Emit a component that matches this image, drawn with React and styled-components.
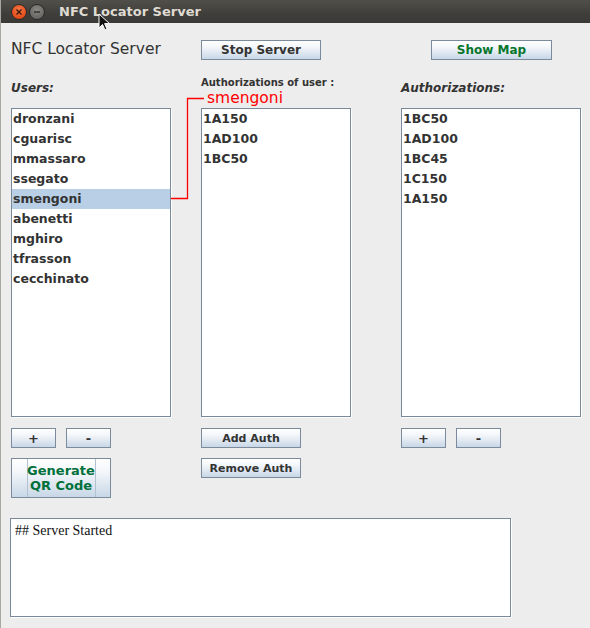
import React from "react";
import styled, { createGlobalStyle } from "styled-components";

const GlobalStyle = createGlobalStyle`
  html, body {
    margin: 0;
    padding: 0;
    background: #ededed;
  }
  body {
    font-family: "DejaVu Sans", sans-serif;
  }
`;

const Window = styled.div`
  width: 590px;
  height: 628px;
  background: #ededed;
  border-left: 1px solid #a9a7a1;
  box-sizing: border-box;
  position: relative;
  overflow: hidden;
`;

const TitleBar = styled.div`
  height: 23px;
  background: linear-gradient(to bottom, #504f4a 0%, #3f3e3a 60%, #3a3935 100%);
  display: flex;
  align-items: center;
  padding-left: 10px;
  box-sizing: border-box;
  position: relative;
`;

const WinButton = styled.div`
  width: 16px;
  height: 16px;
  border-radius: 50%;
  margin-right: 2px;
  display: flex;
  align-items: center;
  justify-content: center;
  background: ${(p) =>
    p.close
      ? "radial-gradient(circle at 50% 35%, #f5794b 0%, #e5511f 60%, #c83e12 100%)"
      : "radial-gradient(circle at 50% 35%, #8a8985 0%, #6d6c68 60%, #5a5955 100%)"};
  border: 1px solid #2c2b28;
  box-sizing: border-box;
`;

const WindowTitle = styled.span`
  margin-left: 12px;
  font-family: "DejaVu Sans", sans-serif;
  font-weight: bold;
  font-size: 13px;
  color: #dfdbd2;
`;

const Cursor = styled.svg`
  position: absolute;
  left: 97px;
  top: 13px;
`;

const Body = styled.div`
  position: relative;
  padding: 17px 0 0 10px;
`;

const Grid = styled.div`
  display: grid;
  grid-template-columns: 190px 200px 179px;
  grid-template-rows: 20px 48px 309px auto auto;
`;

const AppLabel = styled.div`
  font-size: 15.5px;
  color: #333333;
  line-height: 18px;
`;

const ColumnHead = styled.div`
  align-self: end;
  display: flex;
  flex-direction: column;
`;

const SectionLabel = styled.div`
  font-size: 12px;
  font-weight: bold;
  font-style: italic;
  color: #333333;
  line-height: 14px;
  margin-bottom: 13px;
`;

const SmallLabel = styled.div`
  font-size: 10px;
  font-weight: bold;
  color: #333333;
  line-height: 12px;
  margin-bottom: 1px;
`;

const SelectedName = styled.div`
  font-size: 15.5px;
  color: #ff0000;
  line-height: 16px;
  padding-left: 6px;
  margin-bottom: 2px;
`;

const ListBox = styled.div`
  width: ${(p) => p.w}px;
  height: 309px;
  box-sizing: border-box;
  background: #ffffff;
  border: 1px solid #7a8a9b;
  box-shadow: 1px 1px 0 #ffffff;
  display: flex;
  flex-direction: column;
`;

const ListItem = styled.div`
  height: 20px;
  line-height: 20px;
  padding-left: 1px;
  font-size: 12.5px;
  font-weight: bold;
  color: #333333;
  background: ${(p) => (p.selected ? "#b8cfe5" : "transparent")};
`;

const Button = styled.button`
  width: ${(p) => p.w}px;
  height: ${(p) => p.h || 20}px;
  margin-left: ${(p) => p.offset || 0}px;
  padding: 0;
  box-sizing: border-box;
  border: 1px solid #7b8b9c;
  border-radius: 0;
  background: linear-gradient(to bottom, #ffffff 0%, #f3f6fa 35%, #c8d7e7 100%);
  font-family: "DejaVu Sans", sans-serif;
  font-size: ${(p) => p.fs || 12}px;
  font-weight: bold;
  color: ${(p) => (p.green ? "#06762c" : "#333333")};
  line-height: 15px;
  display: flex;
  align-items: center;
  justify-content: center;
`;

const TallButton = styled(Button)`
  color: #00703a;
  font-size: 13px;
  line-height: 15px;
  align-items: stretch;
`;

const TallInner = styled.span`
  width: 67px;
  border-left: 1px solid #b2c0d0;
  border-right: 1px solid #b2c0d0;
  display: flex;
  align-items: center;
  justify-content: center;
  text-align: center;
  white-space: nowrap;
`;

const ButtonRow = styled.div`
  display: flex;
  gap: 10px;
  margin-top: ${(p) => p.top}px;
`;

const Cell = styled.div`
  margin-top: ${(p) => p.top || 0}px;
`;

const Connector = styled.svg`
  position: absolute;
  left: 169px;
  top: 74px;
`;

const LogArea = styled.div`
  width: 501px;
  height: 99px;
  box-sizing: border-box;
  margin: 20px 0 0 -1px;
  background: #ffffff;
  border: 1px solid #7a8a9b;
  box-shadow: 1px 1px 0 #ffffff;
  padding: 4px 0 0 4px;
  font-family: "Liberation Serif", "DejaVu Serif", serif;
  font-size: 14px;
  color: #111111;
`;

const users = [
  "dronzani",
  "cguarisc",
  "mmassaro",
  "ssegato",
  "smengoni",
  "abenetti",
  "mghiro",
  "tfrasson",
  "cecchinato",
];
const userAuths = ["1A150", "1AD100", "1BC50"];
const allAuths = ["1BC50", "1AD100", "1BC45", "1C150", "1A150"];

export default function App() {
  const selected = "smengoni";
  return (
    <>
      <GlobalStyle />
      <Window>
        <TitleBar>
          <WinButton close>
            <svg width="8" height="8" viewBox="0 0 8 8">
              <path d="M1.5 1.5 L6.5 6.5 M6.5 1.5 L1.5 6.5" stroke="#3a1a0c" strokeWidth="1.4" />
            </svg>
          </WinButton>
          <WinButton>
            <svg width="8" height="8" viewBox="0 0 8 8">
              <path d="M1 4 L7 4" stroke="#2e2d2a" strokeWidth="1.4" />
            </svg>
          </WinButton>
          <WindowTitle>NFC Locator Server</WindowTitle>
          <Cursor width="14" height="20" viewBox="0 0 14 20">
            <path
              d="M1 1 L1 15 L4.5 11.5 L7 17 L9 16 L6.6 10.6 L11.5 10.6 Z"
              fill="#111"
              stroke="#fff"
              strokeWidth="1"
            />
          </Cursor>
        </TitleBar>
        <Body>
          <Grid>
            <AppLabel>NFC Locator Server</AppLabel>
            <Button w={120}>Stop Server</Button>
            <Button w={121} offset={30} green>
              Show Map
            </Button>

            <ColumnHead>
              <SectionLabel>Users:</SectionLabel>
            </ColumnHead>
            <ColumnHead>
              <SmallLabel>Authorizations of user :</SmallLabel>
              <SelectedName>{selected}</SelectedName>
            </ColumnHead>
            <ColumnHead>
              <SectionLabel>Authorizations:</SectionLabel>
            </ColumnHead>

            <ListBox w={160}>
              {users.map((u) => (
                <ListItem key={u} selected={u === selected}>
                  {u}
                </ListItem>
              ))}
            </ListBox>
            <ListBox w={150}>
              {userAuths.map((a) => (
                <ListItem key={a}>{a}</ListItem>
              ))}
            </ListBox>
            <ListBox w={180}>
              {allAuths.map((a) => (
                <ListItem key={a}>{a}</ListItem>
              ))}
            </ListBox>

            <ButtonRow top={11}>
              <Button w={45} fs={13}>+</Button>
              <Button w={45} fs={13}>-</Button>
            </ButtonRow>
            <Cell top={11}>
              <Button w={100} fs={11}>Add Auth</Button>
            </Cell>
            <ButtonRow top={11}>
              <Button w={45} fs={13}>+</Button>
              <Button w={45} fs={13}>-</Button>
            </ButtonRow>

            <Cell top={10}>
              <TallButton w={100} h={40}>
                <TallInner>
                  Generate
                  <br />
                  QR Code
                </TallInner>
              </TallButton>
            </Cell>
            <Cell top={10}>
              <Button w={100} fs={11}>Remove Auth</Button>
            </Cell>
            <div />
          </Grid>
          <LogArea>## Server Started</LogArea>
          <Connector width="36" height="104" viewBox="0 0 36 104">
            <path d="M1 101.5 L17.5 101.5 L17.5 1.5 L34 1.5" fill="none" stroke="#ff0000" strokeWidth="1.3" />
          </Connector>
        </Body>
      </Window>
    </>
  );
}
